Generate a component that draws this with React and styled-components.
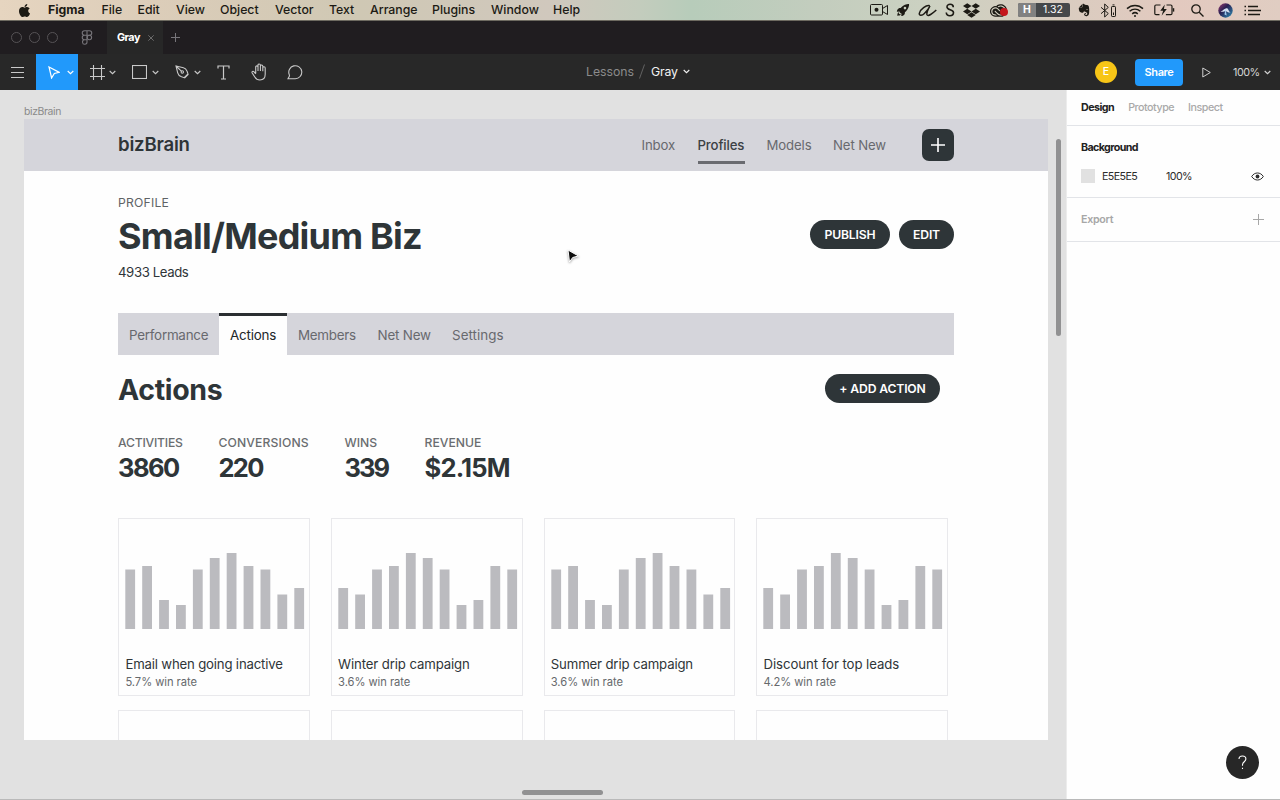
import React from 'react'
import styled, { createGlobalStyle } from 'styled-components'
import { FaApple, FaDropbox, FaEvernote } from 'react-icons/fa'
import { IoRocketSharp } from 'react-icons/io5'
import { SiAdobecreativecloud } from 'react-icons/si'

const GlobalStyle = createGlobalStyle`
  * {
    box-sizing: border-box;
  }
  body {
    margin: 0;
    background: #e1e1e1;
    font-family: Inter, "Liberation Sans", sans-serif;
    overflow: hidden;
  }
  svg {
    display: block;
    flex-shrink: 0;
  }
`

const Screen = styled.div`
  display: flex;
  flex-direction: column;
  height: 800px;
  width: 1280px;
`

/* mac menu bar */
const MenuBar = styled.div`
  align-items: center;
  background: linear-gradient(90deg, #e6d5c0 0%, #dccdb9 12%, #cfc8b4 28%, #d0c8bd 43%, #c3ccbd 50%, #b7ccba 54%, #c3cdbe 64%, #cbd1c1 72%, #d8cdc0 82%, #e3c9bf 92%, #e0cdc2 100%);
  border-bottom: 1px solid #6d6a60;
  color: #1c1a14;
  display: flex;
  flex: 0 0 21px;
  padding-left: 17px;
`
const AppleMark = styled.div`
  width: 31px;
`
const MenuItem = styled.div`
  font-size: 12.3px;
  font-weight: ${({ $bold }) => ($bold ? 700 : 500)};
  line-height: 20px;
  white-space: nowrap;
  width: ${({ $width }) => $width}px;
`
const MenuExtras = styled.div`
  align-items: center;
  display: flex;
  height: 20px;
  margin-left: auto;
  padding-right: 11px;
`
const Extra = styled.div`
  display: flex;
  justify-content: center;
  margin-left: ${({ $gap }) => $gap ?? 0}px;
  position: relative;
  width: ${({ $width }) => $width}px;
`
const RecordDot = styled.span`
  background: #c4161c;
  border-radius: 50%;
  height: 8px;
  position: absolute;
  right: 0;
  top: 6px;
  width: 8px;
`
const HoursBadge = styled.div`
  background: #46484a;
  border-radius: 2px;
  color: #fff;
  display: flex;
  font-size: 10.5px;
  height: 14px;
  line-height: 14px;
  overflow: hidden;
  text-align: center;
  width: 52px;

  b {
    background: #818181;
    width: 18px;
  }
  span {
    flex: 1;
  }
`

/* window chrome */
const TabBar = styled.div`
  align-items: center;
  background: #201d20;
  color: #77757a;
  display: flex;
  flex: 0 0 33px;
`
const TrafficLights = styled.div`
  display: flex;
  gap: 7px;
  padding-left: 11px;
  width: 81px;

  i {
    border: 1px solid #565356;
    border-radius: 50%;
    height: 11px;
    width: 11px;
  }
`
const FileTab = styled.div`
  align-items: center;
  align-self: stretch;
  background: #272727;
  color: #fff;
  display: flex;
  font-size: 10.8px;
  font-weight: 700;
  gap: 8px;
  letter-spacing: -0.5px;
  margin-left: 14px;
  padding-left: 10px;
  width: 56px;

  svg {
    color: #6c6c6c;
  }
`
const NewTab = styled.div`
  margin-left: 8px;
`

const Toolbar = styled.div`
  align-items: center;
  background: #282828;
  color: #d0d0d0;
  display: flex;
  flex: 0 0 36px;
`
const ToolGroup = styled.div`
  display: flex;
  height: 36px;
  flex: 1;
`
const Tool = styled.div`
  align-items: center;
  background: ${({ $active }) => ($active ? '#2199fb' : 'transparent')};
  color: ${({ $active }) => ($active ? '#fff' : '#c9c9c9')};
  display: flex;
  gap: ${({ $gap }) => $gap ?? 5}px;
  padding-left: ${({ $left }) => $left ?? 0}px;
  width: ${({ $width }) => $width}px;
`
const FileName = styled.div`
  align-items: center;
  color: #f2f2f2;
  display: flex;
  font-size: 12.3px;
  gap: 6px;
  letter-spacing: -0.15px;
  padding-bottom: 1px;
  width: 480px;

  em {
    color: #8b8b8b;
    font-style: normal;
    letter-spacing: -0.05px;
  }
  svg {
    margin-left: -1px;
  }
`
const ToolbarRight = styled.div`
  align-items: center;
  display: flex;
  width: 214px;
`
const Avatar = styled.div`
  background: #f7c517;
  border-radius: 50%;
  color: #fff;
  font-size: 10.5px;
  font-weight: 500;
  height: 22px;
  line-height: 22px;
  margin-left: 29px;
  text-align: center;
  width: 22px;
`
const ShareButton = styled.div`
  background: #2199fb;
  border-radius: 4px;
  color: #fff;
  font-size: 11px;
  font-weight: 600;
  height: 27px;
  letter-spacing: -0.4px;
  line-height: 27px;
  margin: 0 19px 0 18px;
  text-align: center;
  width: 48px;
`
const ZoomLevel = styled.div`
  align-items: center;
  color: #d4d4d4;
  display: flex;
  font-size: 10.8px;
  gap: 4px;
  letter-spacing: -0.5px;
  margin-left: 22px;
`

/* workspace */
const Workspace = styled.div`
  border-bottom: 1px solid #b9b9b9;
  display: flex;
  flex: 1;
  min-height: 0;
`
const Canvas = styled.div`
  background: #e1e1e1;
  flex: 0 0 1066px;
  padding: 15px 0 0 24px;
  position: relative;
`
const FrameLabel = styled.div`
  color: #898989;
  font-size: 10.4px;
  height: 14px;
  letter-spacing: -0.35px;
  line-height: 13px;
`
const Artboard = styled.div`
  background: #fefefe;
  color: #2e3538;
  height: 621px;
  overflow: hidden;
  width: 1024px;
`
const Scrollbar = styled.div`
  background: #919192;
  border-radius: 3px;
  position: absolute;
  ${({ $vertical }) => $vertical
    ? 'height: 197px; right: 5px; top: 49px; width: 5px;'
    : 'bottom: 4px; height: 5px; left: 522px; width: 81px;'}
`
const Pointer = styled.svg`
  filter: drop-shadow(0 1px 1px rgba(0, 0, 0, 0.35));
  left: 565px;
  position: absolute;
  top: 157px;
`

/* bizBrain page */
const SiteHeader = styled.div`
  align-items: center;
  background: #d5d5db;
  display: flex;
  height: 52px;
  padding: 0 94px;
`
const Brand = styled.div`
  font-size: 18.6px;
  font-weight: 600;
  letter-spacing: -0.2px;
  line-height: 24px;
  margin-right: auto;
  padding-bottom: 2px;
`
const SiteNav = styled.div`
  display: flex;
  gap: 21.5px;
`
const NavLink = styled.div`
  border-bottom: 3px solid ${({ $active }) => ($active ? '#6a6b70' : 'transparent')};
  color: ${({ $active }) => ($active ? '#3b4044' : '#68696e')};
  font-size: 13.2px;
  font-weight: ${({ $active }) => ($active ? 500 : 400)};
  height: 38px;
  letter-spacing: -0.12px;
  line-height: 38px;
  white-space: nowrap;
  width: ${({ $width }) => $width}px;
`
const AddButton = styled.div`
  align-items: center;
  background: #2e3538;
  border-radius: 7px;
  color: #fff;
  display: flex;
  height: 32px;
  justify-content: center;
  margin-left: 36px;
  width: 32px;
`
const PageBody = styled.div`
  padding: 23px 94px 0;
`
const ProfileHead = styled.div`
  align-items: center;
  display: flex;
  height: 119px;
  padding-bottom: 39px;
`
const ProfileInfo = styled.div`
  flex: 1;
  padding-top: 10px;
`
const Eyebrow = styled.div`
  color: #5f6366;
  font-size: 12.2px;
  letter-spacing: 0.2px;
  line-height: 16px;
`
const Title = styled.h1`
  font-size: 36px;
  font-weight: 700;
  letter-spacing: -0.77px;
  line-height: 50px;
  margin: 0;
`
const Leads = styled.div`
  font-size: 13.2px;
  letter-spacing: -0.4px;
  line-height: 21px;
  padding-top: 1px;
`
const PillGroup = styled.div`
  display: flex;
  gap: 9px;
`
const Pill = styled.div`
  background: #2e3538;
  border-radius: 15px;
  color: #fff;
  font-size: 12.2px;
  font-weight: 600;
  height: 29px;
  letter-spacing: -0.16px;
  line-height: 29px;
  text-align: center;
  white-space: nowrap;
  width: ${({ $width }) => $width}px;
`
const SectionTabs = styled.div`
  background: #d5d5db;
  display: flex;
  height: 42px;
`
const SectionTab = styled.div`
  background: ${({ $active }) => ($active ? '#fefefe' : 'transparent')};
  border-top: 3px solid ${({ $active }) => ($active ? '#2b2f32' : 'transparent')};
  color: ${({ $active }) => ($active ? '#22272a' : '#68696e')};
  font-size: 13.4px;
  letter-spacing: ${({ $spacing }) => $spacing ?? -0.2}px;
  line-height: 38px;
  padding-left: 11px;
  white-space: nowrap;
  width: ${({ $width }) => $width}px;
`
const SectionHead = styled.div`
  align-items: center;
  display: flex;
  height: 29px;
  justify-content: space-between;
  margin-top: 19px;
  padding-right: 14px;
`
const SectionTitle = styled.h2`
  font-size: 28.5px;
  font-weight: 700;
  letter-spacing: -0.35px;
  line-height: 34px;
  margin: 0;
  padding-top: 3px;
`
const Stats = styled.div`
  display: flex;
  height: 48px;
  margin-top: 31px;
`
const Stat = styled.div`
  width: ${({ $width }) => $width}px;
`
const StatLabel = styled.div`
  color: #6a6d70;
  font-size: 12.2px;
  font-weight: 500;
  letter-spacing: ${({ $spacing }) => $spacing}px;
  line-height: 18px;
`
const StatValue = styled.div`
  font-size: 25.5px;
  font-weight: 700;
  letter-spacing: ${({ $spacing }) => $spacing}px;
  line-height: 31px;
`
const CardGrid = styled.div`
  display: grid;
  grid-template-columns: repeat(4, 191.5px);
  grid-auto-rows: 178px;
  gap: 14px 21.2px;
  margin: 36px 0 0 0.4px;
`
const Card = styled.div`
  border: 1px solid #e9e9ec;
  padding: 33px 4px 0 6px;
`
const Chart = styled.svg`
  margin-bottom: 25px;
`
const CardName = styled.div`
  font-size: 13.2px;
  letter-spacing: ${({ $spacing }) => $spacing}px;
  line-height: 20px;
  white-space: nowrap;
`
const CardRate = styled.div`
  color: #66696c;
  font-size: 11.2px;
  letter-spacing: -0.05px;
  line-height: 17px;
`

/* inspector */
const Inspector = styled.div`
  background: #fefefe;
  border-left: 1px solid #ececec;
  color: #2c2c2c;
  flex: 1;
  font-size: 10.7px;
  position: relative;
`
const PanelTabs = styled.div`
  border-bottom: 1px solid #e2e4e8;
  color: #a9a9a9;
  display: flex;
  gap: 14px;
  height: 36px;
  line-height: 36px;
  padding-left: 14px;

  b {
    color: #222;
    letter-spacing: -0.53px;
  }
  span {
    font-weight: 500;
    letter-spacing: -0.47px;
  }
`
const PanelSection = styled.div`
  border-bottom: 1px solid #e2e4e8;
  padding: 0 16px 0 14px;
`
const PanelHeading = styled.div`
  align-items: center;
  color: ${({ $muted }) => ($muted ? '#a7a7a7' : '#222')};
  display: flex;
  font-weight: ${({ $muted }) => ($muted ? 600 : 700)};
  height: 43px;
  justify-content: space-between;
  letter-spacing: ${({ $muted }) => ($muted ? -0.3 : -0.6)}px;
`
const ColorRow = styled.div`
  align-items: center;
  display: flex;
  height: 28px;
  letter-spacing: -0.6px;
  padding-bottom: 14px;

  span {
    margin-left: 7px;
    width: 64px;
  }
  svg {
    margin-left: auto;
  }
`
const Swatch = styled.div`
  background: #e1e1e1;
  height: 14px;
  width: 14px;
`
const HelpButton = styled.div`
  align-items: center;
  background: #272727;
  border-radius: 50%;
  bottom: 20px;
  color: #fff;
  display: flex;
  height: 33px;
  justify-content: center;
  position: absolute;
  right: 21px;
  width: 33px;
`

const Icon = ({ w, h, children, stroke = 1, ...rest }) => (
  <svg width={w} height={h} viewBox={`0 0 ${w} ${h}`} fill="none" stroke="currentColor" strokeWidth={stroke} {...rest}>
    {children}
  </svg>
)

const Chevron = () => (
  <Icon w={7} h={5} stroke={1.1}>
    <path d="M.7 1l2.8 2.7L6.3 1" />
  </Icon>
)

const Plus = ({ size, stroke }) => (
  <Icon w={size} h={size} stroke={stroke}>
    <path d={`M${size / 2} 0v${size}M0 ${size / 2}h${size}`} />
  </Icon>
)

const menus = [
  ['Figma', 53.5], ['File', 36], ['Edit', 38.5], ['View', 44], ['Object', 55], ['Vector', 54],
  ['Text', 41], ['Arrange', 62], ['Plugins', 59], ['Window', 62], ['Help', 40],
]

const barHeights = [59.5, 63, 29, 24, 59.5, 71, 76, 63, 59.5, 34.5, 41]
const mirrored = [...barHeights].reverse()

const cards = [
  { name: 'Email when going inactive', rate: '5.7% win rate', bars: barHeights, spacing: -0.18 },
  { name: 'Winter drip campaign', rate: '3.6% win rate', bars: mirrored, spacing: -0.12 },
  { name: 'Summer drip campaign', rate: '3.6% win rate', bars: barHeights, spacing: -0.15 },
  { name: 'Discount for top leads', rate: '4.2% win rate', bars: mirrored, spacing: -0.06 },
]

const stats = [
  { label: 'ACTIVITIES', value: '3860', width: 100.5, labelSpacing: -0.22, valueSpacing: -1.5 },
  { label: 'CONVERSIONS', value: '220', width: 126, labelSpacing: 0.12, valueSpacing: -1.7 },
  { label: 'WINS', value: '339', width: 80, labelSpacing: 0, valueSpacing: -2 },
  { label: 'REVENUE', value: '$2.15M', width: 100, labelSpacing: 0, valueSpacing: -0.8 },
]

const BarChart = ({ bars }) => (
  <Chart width="180" height="77" viewBox="0 0 180 77">
    {bars.map((height, i) => (
      <rect key={i} x={0.3 + i * 16.9} y={77 - height} width="9.8" height={height} fill="#bbbbbf" />
    ))}
  </Chart>
)

const SystemMenu = () => (
  <MenuBar>
    <AppleMark><FaApple size={15} /></AppleMark>
    {menus.map(([name, width]) => (
      <MenuItem key={name} $width={width} $bold={name === 'Figma'}>{name}</MenuItem>
    ))}
    <MenuExtras>
      <Extra $width={20}>
        <Icon w={18} h={12}>
          <rect x=".5" y=".5" width="12" height="10.5" rx="1" />
          <path d="M12.5 4.5l5-3v9l-5-3" />
          <circle cx="6.5" cy="5.7" r="2" fill="currentColor" stroke="none" />
        </Icon>
      </Extra>
      <Extra $width={27}><IoRocketSharp size={14} /></Extra>
      <Extra $width={22}>
        <Icon w={19} h={13} stroke={1.5}>
          <path d="M11.8 1.8C8.500.6 2 5.500 1.300 9.300c-.3 2.900 2.900 2.300 5.100.2C8.700 7.300 10.800 4.500 12 2 10 5.500 8.300 9 9 10.700c1 2.200 5.500-1.200 9.300-4.700" />
        </Icon>
      </Extra>
      <Extra $width={23}>
        <Icon w={10} h={14} stroke={1.6}>
          <path d="M8.300 4.200C8.300 2 6.900 1.300 5.100 1.300 3.200 1.300 2 2.300 2 3.900c0 3.600 6.500 2 6.500 5.700 0 2-1.400 3.100-3.600 3.100S1.300 11.600 1.300 9.500" />
        </Icon>
      </Extra>
      <Extra $width={20}><FaDropbox size={17} /></Extra>
      <Extra $width={19} $gap={8}>
        <SiAdobecreativecloud size={17} />
        <RecordDot />
      </Extra>
      <Extra $width={52} $gap={10}>
        <HoursBadge><b>H</b><span>1.32</span></HoursBadge>
      </Extra>
      <Extra $width={28}><FaEvernote size={14} /></Extra>
      <Extra $width={20}>
        <Icon w={17} h={15}>
          <path d="M1 4.300l7.300 6.200L4.700 14V1l3.600 3.400L1 10.700" />
          <rect x="11.500" y="3.500" width="4" height="10" rx=".7" />
          <path d="M12.500 1.900h2M13.500 9.500v2.500" />
        </Icon>
      </Extra>
      <Extra $width={33}>
        <Icon w={18} h={13} stroke={1.5}>
          <path d="M1 4.600c4.600-4.200 11.400-4.200 16 0M3.600 7.300c3.200-2.900 7.600-2.900 10.800 0M6.200 9.800c1.700-1.400 3.900-1.400 5.600 0" />
          <circle cx="9" cy="12" r="1" fill="currentColor" stroke="none" />
        </Icon>
      </Extra>
      <Extra $width={27}>
        <Icon w={21} h={12} stroke={1.2}>
          <path d="M6.500 1H2Q.8 1 .8 2.200v7.300q0 1.200 1.200 1.200h3.500M12.500 1h4.200q1.300 0 1.300 1.200v7.300q0 1.200-1.300 1.200h-4.800" />
          <path d="M10.800.5L6.300 6.700h2.800l-1.500 5L12.800 5H9.900l.9-4.500z" fill="currentColor" stroke="none" />
          <path d="M19.500 4.200v3.400" strokeWidth="1.500" />
        </Icon>
      </Extra>
      <Extra $width={38}>
        <Icon w={13} h={13} stroke={1.3}>
          <circle cx="5" cy="5" r="4.200" />
          <path d="M8.200 8.200l4.300 4.300" />
        </Icon>
      </Extra>
      <Extra $width={19}>
        <svg width="15" height="15" viewBox="0 0 15 15">
          <defs>
            <linearGradient id="siri" x1="0" y1="0" x2="1" y2="1">
              <stop offset="0" stopColor="#9d3c72" />
              <stop offset=".4" stopColor="#292052" />
              <stop offset="1" stopColor="#2c91b9" />
            </linearGradient>
          </defs>
          <circle cx="7.500" cy="7.500" r="7.200" fill="url(#siri)" />
          <path d="M2.500 8.500c3-1 4.500-4 6.500-3.200 1.600.6 1.700 3.700 3.800 4.200-2.300.5-4-1.300-5-1.300-1.500 0-3 1.200-5.300.3z" fill="#d6dff0" />
          <path d="M7.500 6l1.200 6.500-2.200-1z" fill="#a4ccef" />
        </svg>
      </Extra>
      <Extra $width={34}>
        <Icon w={17} h={11} stroke={1.5}>
          <path d="M4 1.500h10M4 5.500h13M4 9.500h12" />
          <path d="M.5 1.500H2M.5 5.500H2M.5 9.500H2" />
        </Icon>
      </Extra>
    </MenuExtras>
  </MenuBar>
)

const WindowChrome = () => (
  <>
    <TabBar>
      <TrafficLights><i /><i /><i /></TrafficLights>
      <Icon w={12} h={15} stroke={1.1}>
        <path d="M6 .8H3.500a2.250 2.250 0 000 4.500H6zM6 .8h2.500a2.250 2.250 0 010 4.500H6zM6 5.300H3.500a2.250 2.250 0 000 4.500H6zM6 9.800H3.500A2.250 2.250 0 106 12z" />
        <circle cx="8.400" cy="7.500" r="2.200" />
      </Icon>
      <FileTab>
        Gray
        <Icon w={6} h={6}><path d="M.3.3l5.400 5.400M5.700.3L.3 5.700" /></Icon>
      </FileTab>
      <NewTab><Plus size={9} stroke={1} /></NewTab>
    </TabBar>
    <Toolbar>
      <ToolGroup>
        <Tool $width={36} $left={11}>
          <Icon w={13} h={11}><path d="M0 .5h13M0 5.500h13M0 10.500h13" /></Icon>
        </Tool>
        <Tool $active $width={42} $left={12} $gap={7}>
          <Icon w={12} h={13} stroke={1.2}>
            <path d="M1 1l10.300 5.400-5 1.100L3.600 12z" />
          </Icon>
          <Chevron />
        </Tool>
        <Tool $width={54} $left={12} $gap={4}>
          <Icon w={15} h={15} stroke={1.1}><path d="M3.500 0v15M11.500 0v15M0 3.500h15M0 11.500h15" /></Icon>
          <Chevron />
        </Tool>
        <Tool $width={43} $gap={5}>
          <Icon w={15} h={14} stroke={1.1}><rect x=".5" y=".5" width="14" height="13" /></Icon>
          <Chevron />
        </Tool>
        <Tool $width={42} $gap={4}>
          <Icon w={15} h={14} stroke={1.1}>
            <path d="M1 1l7.400 1.700c1.800.5 3 2 3.700 3.600L13 9l-3.800 3.700-2.700-.9C4.500 11 3.200 9.700 2.700 7.800L1 1zM1 1l5.600 5.300M9.500 13.200l4-4" />
            <circle cx="7.300" cy="7" r="1.200" />
          </Icon>
          <Chevron />
        </Tool>
        <Tool $width={34}>
          <Icon w={13} h={15} stroke={1.2}><path d="M1 3.500V1h11v2.500M6.500 1v13M4 14h5" /></Icon>
        </Tool>
        <Tool $width={35}>
          <Icon w={17} h={18} stroke={1.1}>
            <path d="M4.700 10.500V4.100c0-1.700 2.300-1.700 2.300 0V8M7 7V2.200c0-1.700 2.400-1.700 2.400 0V8M9.400 3.200c0-1.700 2.400-1.700 2.400 0v5M11.800 5c0-1.700 2.400-1.700 2.400 0v6.300c0 3.500-2.200 5.700-5.300 5.700-2.400 0-3.900-.9-5.100-3L1.200 10c-.9-1.500.9-2.300 1.900-1.100l1.600 2" />
          </Icon>
        </Tool>
        <Tool $width={21} $left={1}>
          <Icon w={16} h={15} stroke={1.1}>
            <path d="M1 13.700h7.300a6.500 6.500 0 10-6.100-4.200L2.500 11z" />
          </Icon>
        </Tool>
      </ToolGroup>
      <FileName>
        <em>Lessons</em>
        <Icon w={6} h={15} color="#626262"><path d="M5.500.5l-5 14" /></Icon>
        Gray
        <Chevron />
      </FileName>
      <ToolbarRight>
        <Avatar>E</Avatar>
        <ShareButton>Share</ShareButton>
        <Icon w={9} h={11}><path d="M.8 1l7.500 4.500L.8 10z" /></Icon>
        <ZoomLevel>100% <Chevron /></ZoomLevel>
      </ToolbarRight>
    </Toolbar>
  </>
)

const BizBrainPage = () => (
  <Artboard>
    <SiteHeader>
      <Brand>bizBrain</Brand>
      <SiteNav>
        <NavLink $width={34.5}>Inbox</NavLink>
        <NavLink $width={47.5} $active>Profiles</NavLink>
        <NavLink $width={45}>Models</NavLink>
        <NavLink $width={53}>Net New</NavLink>
      </SiteNav>
      <AddButton><Plus size={14} stroke={1.6} /></AddButton>
    </SiteHeader>
    <PageBody>
      <ProfileHead>
        <ProfileInfo>
          <Eyebrow>PROFILE</Eyebrow>
          <Title>Small/Medium Biz</Title>
          <Leads>4933 Leads</Leads>
        </ProfileInfo>
        <PillGroup>
          <Pill $width={80}>PUBLISH</Pill>
          <Pill $width={55}>EDIT</Pill>
        </PillGroup>
      </ProfileHead>
      <SectionTabs>
        <SectionTab $width={101} $spacing={-0.25}>Performance</SectionTab>
        <SectionTab $width={68} $active>Actions</SectionTab>
        <SectionTab $width={79.5} $spacing={-0.3}>Members</SectionTab>
        <SectionTab $width={74.5}>Net New</SectionTab>
        <SectionTab $width={75} $spacing={0.05}>Settings</SectionTab>
      </SectionTabs>
      <SectionHead>
        <SectionTitle>Actions</SectionTitle>
        <Pill $width={115}>+ ADD ACTION</Pill>
      </SectionHead>
      <Stats>
        {stats.map(({ label, value, width, labelSpacing, valueSpacing }) => (
          <Stat key={label} $width={width}>
            <StatLabel $spacing={labelSpacing}>{label}</StatLabel>
            <StatValue $spacing={valueSpacing}>{value}</StatValue>
          </Stat>
        ))}
      </Stats>
      <CardGrid>
        {cards.map(({ name, rate, bars, spacing }) => (
          <Card key={name}>
            <BarChart bars={bars} />
            <CardName $spacing={spacing}>{name}</CardName>
            <CardRate>{rate}</CardRate>
          </Card>
        ))}
        <Card />
        <Card />
        <Card />
        <Card />
      </CardGrid>
    </PageBody>
  </Artboard>
)

const DesignPanel = () => (
  <Inspector>
    <PanelTabs><b>Design</b><span>Prototype</span><span>Inspect</span></PanelTabs>
    <PanelSection>
      <PanelHeading>Background</PanelHeading>
      <ColorRow>
        <Swatch />
        <span>E5E5E5</span>
        100%
        <Icon w={13} h={9}>
          <path d="M.7 4.500C3.500-.2 9.500-.2 12.300 4.500 9.500 9.200 3.500 9.200.7 4.500z" />
          <circle cx="6.500" cy="4.500" r="1.900" fill="currentColor" stroke="none" />
        </Icon>
      </ColorRow>
    </PanelSection>
    <PanelSection>
      <PanelHeading $muted>Export <Plus size={11} stroke={1} /></PanelHeading>
    </PanelSection>
    <HelpButton>
      <Icon w={9} h={15} stroke={1.1}>
        <path d="M1 4C1 2 2.400 1 4.400 1s3.500 1.200 3.500 3c0 2.700-3.400 2.800-3.400 5.800v1M4.500 12.700v1.300" />
      </Icon>
    </HelpButton>
  </Inspector>
)

export default function App() {
  return (
    <Screen>
      <GlobalStyle />
      <SystemMenu />
      <WindowChrome />
      <Workspace>
        <Canvas>
          <FrameLabel>bizBrain</FrameLabel>
          <BizBrainPage />
          <Scrollbar $vertical />
          <Scrollbar />
          <Pointer width="16" height="18" viewBox="0 0 16 18">
            <path d="M3 3l10.500 6-5.800 1.500L4.500 15z" fill="#0d0d0d" stroke="#fff" strokeWidth="1" />
          </Pointer>
        </Canvas>
        <DesignPanel />
      </Workspace>
    </Screen>
  )
}
